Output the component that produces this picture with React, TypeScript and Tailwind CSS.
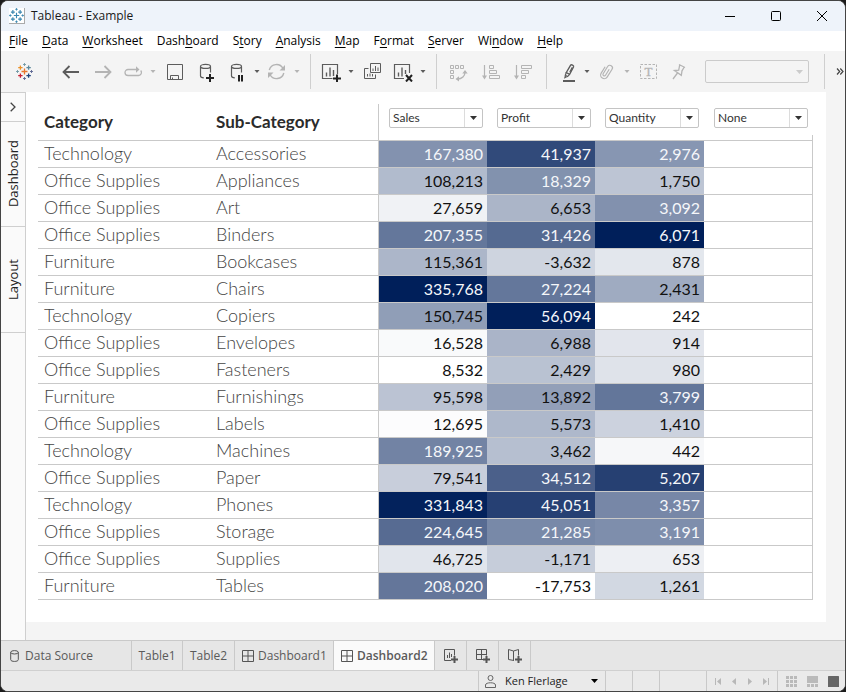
import { useState } from "react";
import type { ReactNode } from "react";

const MENUS = [
    ["", "F", "ile"],
    ["", "D", "ata"],
    ["", "W", "orksheet"],
    ["Dash", "b", "oard"],
    ["S", "t", "ory"],
    ["", "A", "nalysis"],
    ["", "M", "ap"],
    ["F", "o", "rmat"],
    ["", "S", "erver"],
    ["Wi", "n", "dow"],
    ["", "H", "elp"],
];

const ROWS: [string, string, number, number, number][] = [
    ["Technology", "Accessories", 167380, 41937, 2976],
    ["Office Supplies", "Appliances", 108213, 18329, 1750],
    ["Office Supplies", "Art", 27659, 6653, 3092],
    ["Office Supplies", "Binders", 207355, 31426, 6071],
    ["Furniture", "Bookcases", 115361, -3632, 878],
    ["Furniture", "Chairs", 335768, 27224, 2431],
    ["Technology", "Copiers", 150745, 56094, 242],
    ["Office Supplies", "Envelopes", 16528, 6988, 914],
    ["Office Supplies", "Fasteners", 8532, 2429, 980],
    ["Furniture", "Furnishings", 95598, 13892, 3799],
    ["Office Supplies", "Labels", 12695, 5573, 1410],
    ["Technology", "Machines", 189925, 3462, 442],
    ["Office Supplies", "Paper", 79541, 34512, 5207],
    ["Technology", "Phones", 331843, 45051, 3357],
    ["Office Supplies", "Storage", 224645, 21285, 3191],
    ["Office Supplies", "Supplies", 46725, -1171, 653],
    ["Furniture", "Tables", 208020, -17753, 1261],
];

const MEASURES = ["Sales", "Profit", "Quantity", "None"];

// column index in ROWS for each measure
const COLUMN: Record<string, 2 | 3 | 4> = { Sales: 2, Profit: 3, Quantity: 4 };

// white to navy, scaled over the column
function heat(value: number, values: number[]) {
    const min = Math.min(...values);
    const max = Math.max(...values);
    const t = (value - min) / (max - min);
    const mix = (end: number) => Math.round(255 + (end - 255) * t);

    return {
        backgroundColor: `rgb(${mix(0)}, ${mix(31)}, ${mix(90)})`,
        color: t > 0.45 ? "#f5f7fa" : "#111111",
    };
}

function Spark({ colors, size }: { colors: string[]; size: number }) {
    const plus = (x: number, y: number, r: number) => `M${x - r} ${y}h${r * 2}M${x} ${y - r}v${r * 2}`;
    const [mid, tl, tr, bl, br, edge, edge2] = colors;

    return (
        <svg width={size} height={size} viewBox="0 0 17 17" fill="none" strokeWidth="1.3" className="shrink-0">
            <path d={plus(8.5, 8.5, 3)} stroke={mid} />
            <path d={plus(4.4, 4.6, 2.2)} stroke={tl} />
            <path d={plus(12.6, 4.6, 2.2)} stroke={tr} />
            <path d={plus(4.4, 12.6, 2.2)} stroke={bl} />
            <path d={plus(12.6, 12.6, 2.2)} stroke={br} />
            <path d={plus(8.5, 1.5, 1.4) + plus(1.5, 8.5, 1.4)} stroke={edge} strokeWidth="1" />
            <path d={plus(8.5, 15.5, 1.4) + plus(15.5, 8.5, 1.4)} stroke={edge2} strokeWidth="1" />
        </svg>
    );
}

function Icon({ children, off }: { children: ReactNode; off?: boolean }) {
    return (
        <svg
            width="20"
            height="21"
            viewBox="0 0 20 21"
            fill="none"
            stroke="currentColor"
            className={off ? "text-[#b4b4b4]" : "text-[#5c5c5c]"}
        >
            {children}
        </svg>
    );
}

function Tool({ label, caret, off, children }: { label: string; caret?: boolean; off?: boolean; children: ReactNode }) {
    return (
        <div className="flex h-full shrink-0">
            <button aria-label={label} className={`flex items-center justify-center ${caret ? "w-7" : "w-8"}`}>
                <Icon off={off}>{children}</Icon>
            </button>
            {caret && (
                <button aria-label={`${label} options`} className="flex w-3 items-center justify-center">
                    <svg width="6" height="3" viewBox="0 0 6 3" className={off ? "fill-[#b4b4b4]" : "fill-[#5c5c5c]"}>
                        <path d="M0.5 0h5L3 3z" />
                    </svg>
                </button>
            )}
        </div>
    );
}

function Group({ children }: { children: ReactNode }) {
    return (
        <div className="flex h-full shrink-0 items-center">
            <div className="h-[35px] w-px bg-[#cfcfcf]" />
            <div className="flex h-full items-center pr-[7px] pl-[6px]">{children}</div>
        </div>
    );
}

function Cylinder({ x }: { x: number }) {
    return (
        <g transform={`translate(${x} 0)`} strokeWidth="1.2">
            <ellipse cx="5.5" cy="5.4" rx="5" ry="2" />
            <path d="M0.5 5.4v9.6c0 1 1.2 1.7 3.3 1.9M10.5 5.4v6.1" />
        </g>
    );
}

function Toolbar() {
    return (
        <div className="flex h-[41px] items-center bg-[#f4f4f4]">
            <button aria-label="Start page" className="flex h-full w-[47px] shrink-0 items-center justify-center">
                <Spark size={17} colors={["#e8762d", "#eb9129", "#5b879b", "#c72035", "#1f447e", "#7199a6", "#5c6692"]} />
            </button>
            <Group>
                <Tool label="Undo">
                    <path d="M2.5 11H18M8.5 5l-6 6 6 6" strokeWidth="1.8" />
                </Tool>
                <Tool label="Redo" off>
                    <path d="M2 11h15.5M11.5 5l6 6-6 6" strokeWidth="1.8" />
                </Tool>
                <Tool label="Replay" caret off>
                    <path d="M13 8.5H5a3 3 0 0 0 0 6h10.5a3 3 0 0 0 2.2-5" strokeWidth="1.3" />
                    <path d="M13 5.2l3.5 3.3-3.5 3.3z" fill="currentColor" stroke="none" />
                </Tool>
                <Tool label="Save">
                    <path d="M2.5 3.5h15v15h-15z" />
                    <path d="M5.5 18.5v-4h8v4M7.5 16.5v2" />
                </Tool>
                <Tool label="New data source">
                    <Cylinder x={3} />
                    <path d="M9 17h8M13 13v8" strokeWidth="2" className="stroke-[#222]" />
                </Tool>
                <Tool label="Pause auto updates" caret>
                    <Cylinder x={4} />
                    <path d="M12 14v6.5M15 14v6.5" strokeWidth="2" className="stroke-[#222]" />
                </Tool>
                <Tool label="Run update" caret off>
                    <path d="M2.3 9A7.4 7.4 0 0 1 16 7.5M16.8 12A7.4 7.4 0 0 1 3 13.5" strokeWidth="1.4" />
                    <path d="M18 4v5.5h-5.5zM1 17v-5.5h5.5z" fill="currentColor" stroke="none" />
                </Tool>
            </Group>
            <Group>
                <Tool label="New worksheet" caret>
                    <path d="M11.5 17.5h-10v-14h15v9.5" strokeWidth="1.2" />
                    <path d="M5.5 11.5v4M9 6.5v9M12.5 9v6" strokeWidth="1.4" />
                    <path d="M12 17.5h8M16 13.5v7.5" strokeWidth="2" className="stroke-[#222]" />
                </Tool>
                <Tool label="Duplicate">
                    <path d="M7.5 2.5h10v9h-10zM5.5 7.5h-4v10h11v-4" />
                    <path d="M10 7.5v2.5M12.5 5v5M15 6.5v3.5M4.5 13v2.5M7 12.5v3M9.5 13v2.5" />
                </Tool>
                <Tool label="Clear sheet" caret>
                    <path d="M11 17.5H1.5v-14h15v8.5" strokeWidth="1.2" />
                    <path d="M5.5 11.5v4M9 6.5v9M12.5 9v4" strokeWidth="1.4" />
                    <path d="M13 14l6 6.5M19 14l-6 6.5" strokeWidth="2" className="stroke-[#222]" />
                </Tool>
            </Group>
            <Group>
                <Tool label="Swap rows and columns" off>
                    <path d="M1.5 4.5h3v3h-3zM6.5 4.5h3v3h-3zM11.5 4.5h3v3h-3zM1.5 9.5h3v3h-3zM1.5 14.5h3v3h-3z" />
                    <path d="M8.5 18c4.5 0 7.5-3 7.5-7" strokeWidth="1.3" />
                    <path d="M13.3 12.5L16 9l2.7 3.5zM10 15.3L6.5 18l3.5 2.5z" fill="currentColor" stroke="none" />
                </Tool>
                <Tool label="Sort ascending" off>
                    <path d="M3.5 4v12" strokeWidth="1.2" />
                    <path d="M1 14.5h5l-2.5 4z" fill="currentColor" stroke="none" />
                    <path d="M8.5 4.5h4v3h-4zM8.5 9.5h7v3h-7zM8.5 14.5h10v3h-10z" />
                </Tool>
                <Tool label="Sort descending" off>
                    <path d="M3.5 4v12" strokeWidth="1.2" />
                    <path d="M1 14.5h5l-2.5 4z" fill="currentColor" stroke="none" />
                    <path d="M8.5 4.5h10v3h-10zM8.5 9.5h7v3h-7zM8.5 14.5h4v3h-4z" />
                </Tool>
            </Group>
            <Group>
                <Tool label="Highlight" caret>
                    <path d="M9.3 11.5l4.2-7.2c.8-1.3 3.7.3 3 1.7l-3.9 7.3z" strokeWidth="1.4" />
                    <path d="M12.8 11l2.5-4.6M9.3 11.5l-1 2.8 2.3 1.3 2-2.3" strokeWidth="1.2" />
                    <path d="M7.8 14.5l2.5 1.4-3.3 1.8z" fill="currentColor" stroke="none" />
                    <path d="M6 20h12" strokeWidth="2" />
                </Tool>
                <Tool label="Group members" caret off>
                    <g transform="rotate(32 9 11)" strokeWidth="1.2">
                        <path d="M5.5 7v7.5a3.6 3.6 0 0 0 7.2 0V5.5a2.6 2.6 0 0 0-5.2 0v8.5a1.4 1.4 0 0 0 2.8 0V7" />
                    </g>
                </Tool>
                <Tool label="Show mark labels" off>
                    <path d="M1.5 3.5h16v14h-16z" strokeDasharray="2.5 1.5" />
                    <text x="9.5" y="15" textAnchor="middle" fontSize="13" fontFamily="Liberation Serif, serif" fill="currentColor" strokeWidth="0.3">
                        T
                    </text>
                </Tool>
                <Tool label="Fix axes" off>
                    <path d="M8 3.5l6 3M8.7 4.2l-1 5-4.2.3 6.8 4.8.7-4.5 2.3-3.8M6.5 12l-4.5 6" strokeWidth="1.3" />
                </Tool>
                <select
                    aria-label="Fit"
                    disabled
                    className="ml-2 h-[23px] w-[104px] appearance-none rounded-[2px] border border-[#cbcbcb] bg-[#f4f4f4]"
                />
                <svg width="7" height="4" viewBox="0 0 7 4" className="-ml-[13px] fill-[#cbcbcb]">
                    <path d="M0 0h7L3.5 4z" />
                </svg>
            </Group>
            <div className="ml-auto flex h-full w-[21px] shrink-0 items-center">
                <div className="h-[35px] w-px bg-[#cfcfcf]" />
                <button aria-label="More tools" className="flex flex-1 justify-end pr-px">
                    <svg width="8" height="7" viewBox="0 0 8 7" fill="none" className="stroke-[#444]" strokeWidth="1.2">
                        <path d="M1 0.5l2.7 3-2.7 3M4.3 0.5l2.7 3-2.7 3" />
                    </svg>
                </button>
            </div>
        </div>
    );
}

function Sidebar() {
    const tab = "flex items-center justify-center border-b border-[#cfcfcf] text-[#222]";

    return (
        <aside className="flex w-[25px] shrink-0 flex-col border-t border-r border-[#cfcfcf] bg-[#fafafa]">
            <button aria-label="Expand pane" className={`h-[29px] ${tab}`}>
                <svg width="6" height="10" viewBox="0 0 6 10" fill="none" stroke="#444" strokeWidth="1.3">
                    <path d="M0.7 0.7L5 5 0.7 9.3" />
                </svg>
            </button>
            <button className={`h-[105px] ${tab}`}>
                <span className="rotate-180 text-[13px] leading-4 [writing-mode:vertical-rl]">Dashboard</span>
            </button>
            <button className={`h-[106px] ${tab}`}>
                <span className="rotate-180 text-[13px] leading-4 [writing-mode:vertical-rl]">Layout</span>
            </button>
        </aside>
    );
}

function MeasureSelect({ index, value, onChange }: { index: number; value: string; onChange: (v: string) => void }) {
    return (
        <div className="relative h-5 max-w-[94px]">
            <select
                aria-label={`Measure ${index + 1}`}
                value={value}
                onChange={(e) => onChange(e.target.value)}
                className="block h-5 w-full appearance-none rounded-[2px] border border-[#c4c4c4] bg-white pl-[3px] text-[12px] leading-4 font-normal text-[#333]"
            >
                {MEASURES.map((m) => (
                    <option key={m}>{m}</option>
                ))}
            </select>
            <span className="pointer-events-none absolute inset-y-px right-px flex w-[18px] items-center justify-center border-l border-[#dcdcdc]">
                <svg width="7" height="4" viewBox="0 0 7 4" className="fill-[#333]">
                    <path d="M0 0h7L3.5 4z" />
                </svg>
            </span>
        </div>
    );
}

function HeatTable() {
    const [measures, setMeasures] = useState(MEASURES);

    const change = (i: number, v: string) => setMeasures(measures.map((m, j) => (j === i ? v : m)));
    const line = "border-b border-[#c9c9c9]";

    return (
        <table className="w-full table-fixed border-separate border-spacing-0 font-[Lato,sans-serif] text-[18px] leading-5">
            <colgroup>
                <col className="w-[172px]" />
                <col className="w-[169px]" />
                <col className="w-[108px]" />
                <col className="w-[108px]" />
                <col className="w-[109px]" />
                <col className="w-[109px]" />
            </colgroup>
            <thead>
                <tr className="h-[31px] text-left text-[#2b2b2b]">
                    <th rowSpan={2} className={`p-0 pl-[6px] text-[17px] ${line}`}>Category</th>
                    <th rowSpan={2} className={`border-r p-0 pl-[6px] text-[17px] ${line}`}>Sub-Category</th>
                    {measures.map((m, i) => (
                        <th key={i} className="p-0 pt-1 pr-1 pl-[10px] align-top">
                            <MeasureSelect index={i} value={m} onChange={(v) => change(i, v)} />
                        </th>
                    ))}
                </tr>
                <tr className="h-[6px]">
                    <td colSpan={4} className={`border-r p-0 ${line}`} />
                </tr>
            </thead>
            <tbody>
                {ROWS.map((row) => (
                    <tr key={row[1]} className="h-[27px] font-light text-[#444]">
                        <td className={`p-0 pb-[3px] pl-[6px] ${line}`}>{row[0]}</td>
                        <td className={`border-r p-0 pb-[3px] pl-[6px] ${line}`}>{row[1]}</td>
                        {measures.map((m, i) => {
                            const edge = i === 3 ? "border-r" : "";
                            const col = COLUMN[m];
                            if (!col) return <td key={i} className={`p-0 ${edge} ${line}`} />;

                            return (
                                <td
                                    key={i}
                                    className={`p-0 pr-1 text-right text-[16px] font-normal ${edge} ${line}`}
                                    style={heat(row[col], ROWS.map((r) => r[col]))}
                                >
                                    {row[col].toLocaleString("en-US")}
                                </td>
                            );
                        })}
                    </tr>
                ))}
            </tbody>
        </table>
    );
}

function GridIcon() {
    return (
        <svg width="12" height="12" viewBox="0 0 12 12" fill="none" stroke="#555">
            <path d="M0.5 0.5h11v11h-11zM6 0.5v11M0.5 6h11" />
        </svg>
    );
}

function SheetTabs() {
    const tab = "flex items-center border-r border-[#c9c9c9]";

    return (
        <div className="flex h-[30px] border-t border-[#c9c9c9] bg-[#e6e6e6] text-[12px] text-[#5a5a5a]">
            <button className={`w-[131px] gap-[6px] pl-[9px] ${tab}`}>
                <svg width="9" height="12" viewBox="0 0 9 12" fill="none" stroke="#555">
                    <ellipse cx="4.5" cy="2.3" rx="3.8" ry="1.7" />
                    <path d="M0.7 2.3v7.4c0 2.3 7.6 2.3 7.6 0V2.3" />
                </svg>
                Data Source
            </button>
            <button className={`w-[51px] justify-center ${tab}`}>Table1</button>
            <button className={`w-[52px] justify-center ${tab}`}>Table2</button>
            <button className={`w-[99px] gap-1 pl-[7px] ${tab}`}>
                <GridIcon />
                Dashboard1
            </button>
            <button className={`w-[101px] gap-1 bg-[#fafafa] pl-[7px] font-semibold ${tab}`}>
                <GridIcon />
                Dashboard2
            </button>
            <button aria-label="New worksheet" className={`w-8 justify-center ${tab}`}>
                <svg width="16" height="16" viewBox="0 0 16 16" fill="none" stroke="#555">
                    <path d="M8 12.5H1.5v-11h10v6M4.5 7v3M6.5 4.5V10M8.5 6v3" />
                    <path d="M8 11.5h7M11.5 8v7" strokeWidth="2" />
                </svg>
            </button>
            <button aria-label="New dashboard" className={`w-8 justify-center ${tab}`}>
                <svg width="16" height="16" viewBox="0 0 16 16" fill="none" stroke="#555">
                    <path d="M8 11.5H1.5v-10h10v6M6.5 1.5v10M1.5 6.5h10" />
                    <path d="M8 11.5h7M11.5 8v7" strokeWidth="2" />
                </svg>
            </button>
            <button aria-label="New story" className={`w-8 justify-center ${tab}`}>
                <svg width="16" height="16" viewBox="0 0 16 16" fill="none" stroke="#555">
                    <path d="M7 12.5l-5.5-1v-10l5 1.5 5-1.5v6M6.5 3v9.5" />
                    <path d="M8 11.5h7M11.5 8v7" strokeWidth="2" />
                </svg>
            </button>
        </div>
    );
}

function StatusBar() {
    const cell = "h-full shrink-0 border-l border-[#c9c9c9]";

    return (
        <footer className="flex h-[21px] items-center justify-end border-t border-[#d0d0d0] bg-[#eaeaea] text-[11px] text-[#222]">
            <button className={`flex w-[127px] items-center gap-[9px] pl-[6px] ${cell}`}>
                <svg width="11" height="13" viewBox="0 0 11 13" fill="none" stroke="#666">
                    <circle cx="5.5" cy="3" r="2.5" />
                    <path d="M0.5 12.5V10c0-3 10-3 10 0v2.5z" />
                </svg>
                Ken Flerlage
                <svg width="7" height="4" viewBox="0 0 7 4" className="mr-[7px] ml-auto">
                    <path d="M0 0h7L3.5 4z" />
                </svg>
            </button>
            <div className={`w-[27px] ${cell}`} />
            <div className={`w-[27px] ${cell}`} />
            <div className={`w-[47px] ${cell}`} />
            <div className={`flex w-[71px] items-center justify-between px-2 ${cell}`}>
                <button aria-label="First sheet">
                    <svg width="6" height="7" viewBox="0 0 6 7" fill="#b8b8b8">
                        <path d="M0 0h1v7H0zM6 0v7L2 3.5z" />
                    </svg>
                </button>
                <button aria-label="Previous sheet">
                    <svg width="4" height="7" viewBox="0 0 4 7" fill="#b8b8b8">
                        <path d="M4 0v7L0 3.5z" />
                    </svg>
                </button>
                <button aria-label="Next sheet">
                    <svg width="4" height="7" viewBox="0 0 4 7" fill="#b8b8b8">
                        <path d="M0 0v7l4-3.5z" />
                    </svg>
                </button>
                <button aria-label="Last sheet">
                    <svg width="6" height="7" viewBox="0 0 6 7" fill="#b8b8b8">
                        <path d="M5 0h1v7H5zM0 0v7l4-3.5z" />
                    </svg>
                </button>
            </div>
            <div className={`flex w-[68px] items-center justify-between pr-[6px] pl-2 ${cell}`}>
                <button aria-label="Sheet sorter">
                    <svg width="11" height="11" viewBox="0 0 11 11" fill="#bababa">
                        <path d="M0 0h3v3H0zM4 0h3v3H4zM8 0h3v3H8zM0 4h3v3H0zM4 4h3v3H4zM8 4h3v3H8zM0 8h3v3H0zM4 8h3v3H4zM8 8h3v3H8z" />
                    </svg>
                </button>
                <button aria-label="Filmstrip">
                    <svg width="11" height="11" viewBox="0 0 11 11" fill="#bababa">
                        <path d="M0 0h11v7H0zM0 8h3v3H0zM4 8h3v3H4zM8 8h3v3H8z" />
                    </svg>
                </button>
                <button aria-label="Tabs">
                    <svg width="11" height="11" viewBox="0 0 11 11" fill="#666">
                        <rect width="11" height="11" rx="0.5" />
                    </svg>
                </button>
            </div>
        </footer>
    );
}

export default function App() {
    const blue = "#3b87b0";

    return (
        <div className="min-h-screen bg-[#1c1c1c] font-['Open_Sans',sans-serif]">
            <div className="flex min-h-screen flex-col overflow-hidden rounded-lg border border-[#444] bg-[#f4f4f4]">
                {/* Title bar */}
                <header className="flex h-[30px] items-center bg-[#eef3fa] pl-2">
                    <span className="flex h-4 w-4 items-center justify-center border-r border-b border-[#aaa] bg-white">
                        <Spark size={15} colors={[blue, blue, blue, blue, blue, blue, blue]} />
                    </span>
                    <h1 className="ml-[6px] text-[12px] text-[#1a1a1a]">Tableau - Example</h1>
                    <div className="ml-auto flex h-full">
                        <button aria-label="Minimize" className="flex w-[46px] items-center justify-center">
                            <svg width="10" height="10" viewBox="0 0 10 10" stroke="#000">
                                <path d="M0 5.5h10" />
                            </svg>
                        </button>
                        <button aria-label="Maximize" className="flex w-[46px] items-center justify-center">
                            <svg width="10" height="10" viewBox="0 0 10 10" fill="none" stroke="#000">
                                <rect x="0.5" y="0.5" width="9" height="9" rx="1" />
                            </svg>
                        </button>
                        <button aria-label="Close" className="flex w-[46px] items-center justify-center">
                            <svg width="10" height="10" viewBox="0 0 10 10" stroke="#000">
                                <path d="M0 0l10 10M10 0L0 10" />
                            </svg>
                        </button>
                    </div>
                </header>

                {/* Menu */}
                <nav className="flex h-5 items-center bg-white pl-px">
                    {MENUS.map(([before, key, after]) => (
                        <button key={before + key} className="px-[7px] text-[12px] leading-5 text-black">
                            {before}
                            <span className="underline underline-offset-2">{key}</span>
                            {after}
                        </button>
                    ))}
                </nav>

                <Toolbar />

                <div className="flex flex-1">
                    <Sidebar />
                    <main className="mr-[19px] mb-[18px] flex-1 bg-white pt-3 pr-[13px] pb-[22px] pl-3">
                        <HeatTable />
                    </main>
                </div>

                <SheetTabs />
                <StatusBar />
            </div>
        </div>
    );
}
